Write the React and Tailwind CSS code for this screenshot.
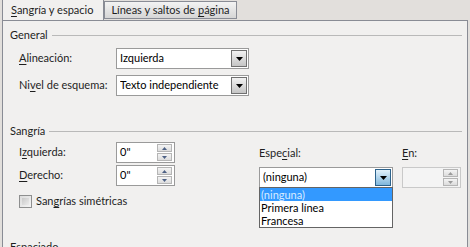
import React from 'react';

const font = { fontFamily: 'Lato, "Noto Sans", sans-serif' };

const U = ({ children }) => <span className="underline underline-offset-2">{children}</span>;

const Arrow = () => (
  <svg width="7" height="4" viewBox="0 0 7 4">
    <path d="M0 0h7L3.5 4z" fill="#000" />
  </svg>
);

const Select = ({ value, width, active }) => (
  <div className={`flex h-[21px] items-center border border-[#9a9a9a] bg-white pl-[3px] pr-[1px] ${width}`}>
    <span className="flex-1 truncate text-black">{value}</span>
    <div
      className={`flex h-[17px] w-[16px] items-center justify-center border ${
        active
          ? 'border-[#2c628b] bg-gradient-to-b from-[#e3f2fb] to-[#7fb7dc]'
          : 'border-[#707070] bg-gradient-to-b from-[#f2f2f2] to-[#c5c5c5]'
      }`}
    >
      <Arrow />
    </div>
  </div>
);

const Spin = ({ value, disabled }) => (
  <div className={`flex h-[21px] w-[59px] items-center border ${disabled ? 'border-[#c9c9c9] bg-[#f4f4f4]' : 'border-[#9a9a9a] bg-white'} pl-[3px] pr-[2px]`}>
    <span className="flex-1 text-black">{value}</span>
    <div className="flex flex-col gap-[1px]">
      <div className="flex h-[8px] w-[15px] items-center justify-center border border-[#b5b5b5] bg-gradient-to-b from-[#f4f4f4] to-[#dcdcdc]">
        <svg width="5" height="3" viewBox="0 0 5 3"><path d="M0 3h5L2.5 0z" fill={disabled ? '#9a9a9a' : '#4d6185'} /></svg>
      </div>
      <div className="flex h-[8px] w-[15px] items-center justify-center border border-[#b5b5b5] bg-gradient-to-b from-[#f4f4f4] to-[#dcdcdc]">
        <svg width="5" height="3" viewBox="0 0 5 3"><path d="M0 0h5L2.5 3z" fill={disabled ? '#9a9a9a' : '#4d6185'} /></svg>
      </div>
    </div>
  </div>
);

const Group = ({ title }) => (
  <div className="flex h-[14px] items-center pl-[7px] pr-[5px]">
    <span className="text-[#1e1e1e]">{title}</span>
    <div className="ml-[4px] h-px flex-1 bg-[#b9b9b9]" />
  </div>
);

export default function App() {
  return (
    <div className="flex h-[247px] w-[470px] flex-col overflow-hidden bg-[#e2dfdc] text-[11px] text-[#1e1e1e]" style={font}>
      {/* Tabs */}
      <div className="flex h-[20px] items-end">
        <div className="relative z-10 ml-[2px] h-[21px] w-[102px] border-r border-l border-[#898c95] bg-[#f1f0ef] pl-[8px] pt-[3px]">
          <U>S</U>angría y espacio
        </div>
        <div className="mb-px flex h-[18px] w-[133px] items-center justify-center border border-[#898c95] bg-gradient-to-b from-[#f3f3f3] to-[#d6d6d6]">
          <span>
            Líneas y saltos de <U>p</U>ágina
          </span>
        </div>
      </div>

      {/* Panel */}
      <div className="ml-[2px] mr-[2px] flex-1 border-t border-r border-l border-[#898c95] bg-[#f1f0ef] pt-[7px]">
        <Group title="General" />

        <div className="mt-[6px] flex items-center pl-[16px]">
          <span className="w-[97px]">
            <U>A</U>lineación:
          </span>
          <Select value="Izquierda" width="w-[133px]" />
        </div>
        <div className="mt-[6px] flex items-center pl-[16px]">
          <span className="w-[97px]">
            Ni<U>v</U>el de esquema:
          </span>
          <Select value="Texto independiente" width="w-[133px]" />
        </div>

        <div className="mt-[28px]">
          <Group title="Sangría" />
        </div>

        <div className="flex pl-[16px]">
          <div className="mt-[4px] flex w-[240px] flex-col">
            <div className="flex items-center">
              <span className="w-[97px]">
                I<U>z</U>quierda:
              </span>
              <Spin value={'0"'} />
            </div>
            <div className="mt-[2px] flex items-center">
              <span className="w-[97px]">
                <U>D</U>erecho:
              </span>
              <Spin value={'0"'} />
            </div>
            <div className="mt-[9px] flex h-[13px] items-center">
              <div className="h-[13px] w-[13px] border border-[#8e8f8f] bg-gradient-to-br from-[#dcdcdc] to-[#f4f4f4] p-[2px]">
                <div className="h-full w-full bg-gradient-to-br from-[#c9c9c9] to-[#ececec]" />
              </div>
              <span className="ml-[4px]">
                San<U>g</U>rías simétricas
              </span>
            </div>
          </div>

          <div className="mt-[8px] flex flex-col">
            <span className="h-[14px] leading-[14px]">
              Espe<U>c</U>ial:
            </span>
            <div className="relative mt-[7px]">
              <Select value="(ninguna)" width="w-[134px]" active />
              <div className="absolute top-[20px] left-0 w-[134px] border border-[#646464] bg-white leading-[13px]">
                <div className="bg-[#3399ff] pl-px text-[#d8ecff]">(ninguna)</div>
                <div className="pl-px text-black">Primera línea</div>
                <div className="pl-px text-black">Francesa</div>
              </div>
            </div>
          </div>

          <div className="ml-[9px] mt-[8px] flex flex-col">
            <span className="h-[14px] leading-[14px]">
              <U>E</U>n:
            </span>
            <div className="mt-[7px]">
              <Spin value="" disabled />
            </div>
          </div>
        </div>

        <div className="mt-[31px] pl-[7px]">Espaciado</div>
      </div>
    </div>
  );
}
